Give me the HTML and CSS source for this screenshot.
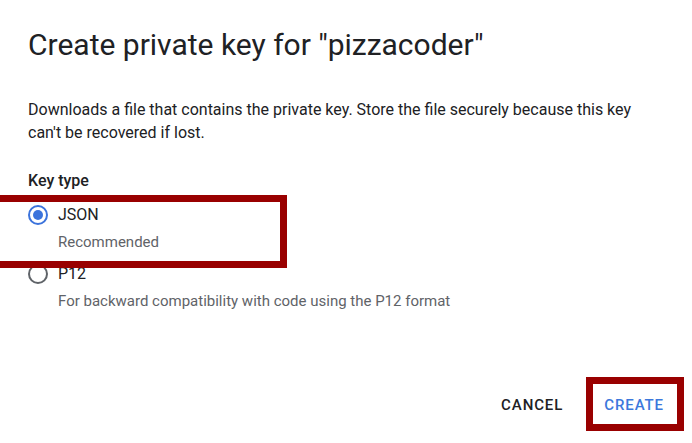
FILE: index.html
```html
<!DOCTYPE html>
<html>
<head>
<meta charset="utf-8">
<link rel="stylesheet" href="styles.css">
</head>
<body>
<div class="dialog">
  <h1 class="title">Create private key for "pizzacoder"</h1>
  <p class="desc">Downloads a file that contains the private key. Store the file securely because this key can't be recovered if lost.</p>
  <div class="label">Key type</div>
  <div class="options">
    <div class="option">
      <span class="radio checked"></span>
      <div class="opt-text">
        <div class="opt-title">JSON</div>
        <div class="opt-sub">Recommended</div>
      </div>
    </div>
    <div class="option">
      <span class="radio"></span>
      <div class="opt-text">
        <div class="opt-title">P12</div>
        <div class="opt-sub">For backward compatibility with code using the P12 format</div>
      </div>
    </div>
  </div>
  <div class="actions">
    <button class="btn">CANCEL</button>
    <button class="btn primary">CREATE</button>
  </div>
</div>
<div class="mark mark-json"></div>
<div class="mark mark-create"></div>
</body>
</html>
```

FILE: styles.css
```css
html, body {
  margin: 0;
  padding: 0;
  background: #fff;
}
body {
  font-family: Roboto, "Liberation Sans", sans-serif;
  color: #202124;
  width: 692px;
  height: 443px;
  overflow: hidden;
  position: relative;
}
.dialog {
  box-sizing: border-box;
  height: 443px;
  padding: 27px 28px 20px 28px;
  display: flex;
  flex-direction: column;
}
.title {
  margin: 0;
  font-size: 30px;
  font-weight: 400;
  line-height: 36px;
  color: #202124;
}
.desc {
  margin: 35px 0 0 0;
  font-size: 16px;
  line-height: 23px;
  color: #202124;
}
.label {
  margin-top: 25px;
  font-size: 16px;
  font-weight: 500;
  line-height: 24px;
}
.options {
  display: flex;
  flex-direction: column;
  gap: 10px;
  margin-top: 10px;
}
.option {
  display: flex;
  align-items: flex-start;
  gap: 10px;
}
.radio {
  box-sizing: border-box;
  width: 20px;
  height: 20px;
  border-radius: 50%;
  border: 2px solid #5f6368;
  margin-top: 2px;
  flex: none;
  display: flex;
  align-items: center;
  justify-content: center;
}
.radio.checked {
  border-color: #3b73dc;
}
.radio.checked::after {
  content: "";
  width: 10px;
  height: 10px;
  border-radius: 50%;
  background: #3b73dc;
}
.opt-title {
  font-size: 16px;
  line-height: 24px;
  color: #202124;
}
.opt-sub {
  margin-top: 5px;
  font-size: 15px;
  line-height: 20px;
  color: #5f6368;
}
.actions {
  margin-top: auto;
  display: flex;
  justify-content: flex-end;
  gap: 13px;
  margin-right: -14px;
}
.btn {
  font-family: Roboto, "Liberation Sans", sans-serif;
  font-size: 15px;
  font-weight: 500;
  letter-spacing: 0.9px;
  height: 36px;
  padding: 0 14px;
  border: none;
  background: transparent;
  color: #202124;
}
.btn.primary {
  color: #3c78dc;
}
.mark {
  position: absolute;
  box-sizing: border-box;
  border: 7px solid #990000;
}
.mark-json {
  left: -10px;
  top: 195px;
  width: 297px;
  height: 73px;
}
.mark-create {
  left: 586px;
  top: 377px;
  width: 98px;
  height: 54px;
}
```
